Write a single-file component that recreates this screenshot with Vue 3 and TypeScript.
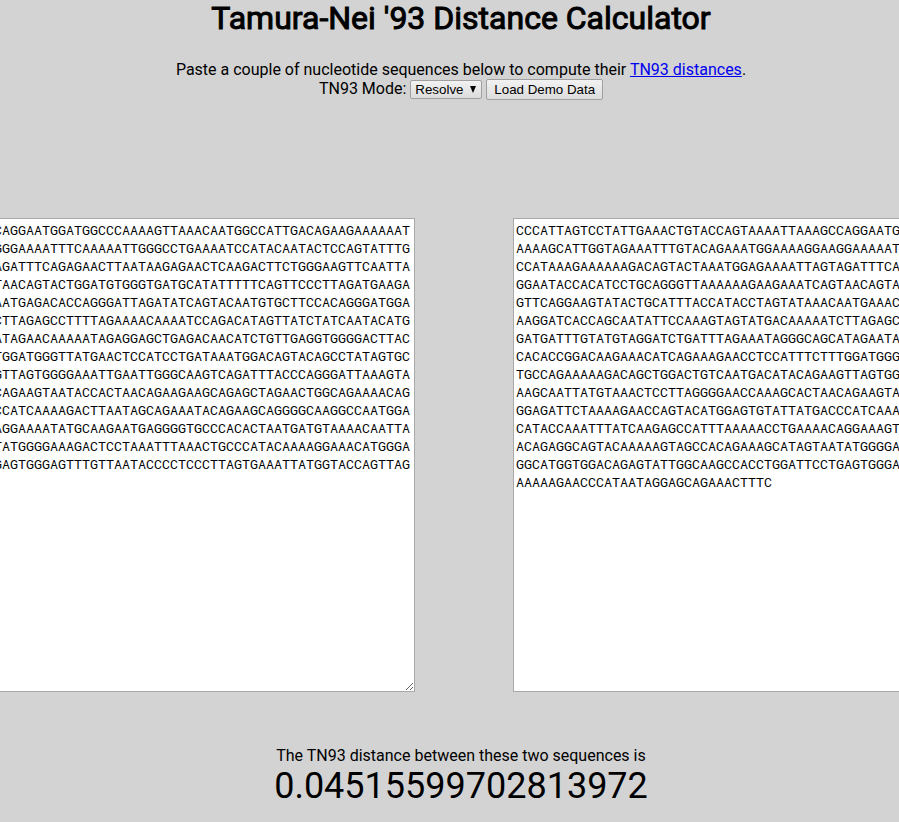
<script setup lang="ts">
import { ref } from 'vue'

type Mode = 'Resolve' | 'Average' | 'GapMM' | 'Skip'

const modes: Mode[] = ['Resolve', 'Average', 'GapMM', 'Skip']
const mode = ref<Mode>('Resolve')
const distance = ref('0.04515599702813972')

const demoFirst = [
  'CAGGAATGGATGGCCCAAAAGTTAAACAATGGCCATTGACAGAAGAAAAAAT',
  'GGGAAAATTTCAAAAATTGGGCCTGAAAATCCATACAATACTCCAGTATTTG',
  'AGATTTCAGAGAACTTAATAAGAGAACTCAAGACTTCTGGGAAGTTCAATTA',
  'TAACAGTACTGGATGTGGGTGATGCATATTTTTCAGTTCCCTTAGATGAAGA',
  'AATGAGACACCAGGGATTAGATATCAGTACAATGTGCTTCCACAGGGATGGA',
  'CTTAGAGCCTTTTAGAAAACAAAATCCAGACATAGTTATCTATCAATACATG',
  'ATAGAACAAAAATAGAGGAGCTGAGACAACATCTGTTGAGGTGGGGACTTAC',
  'TGGATGGGTTATGAACTCCATCCTGATAAATGGACAGTACAGCCTATAGTGC',
  'GTTAGTGGGGAAATTGAATTGGGCAAGTCAGATTTACCCAGGGATTAAAGTA',
  'CAGAAGTAATACCACTAACAGAAGAAGCAGAGCTAGAACTGGCAGAAAACAG',
  'CCATCAAAAGACTTAATAGCAGAAATACAGAAGCAGGGGCAAGGCCAATGGA',
  'AGGAAAATATGCAAGAATGAGGGGTGCCCACACTAATGATGTAAAACAATTA',
  'TATGGGGAAAGACTCCTAAATTTAAACTGCCCATACAAAAGGAAACATGGGA',
  'GAGTGGGAGTTTGTTAATACCCCTCCCTTAGTGAAATTATGGTACCAGTTAG',
].join('\n')

const demoSecond = [
  'CCCATTAGTCCTATTGAAACTGTACCAGTAAAATTAAAGCCAGGAATG',
  'AAAAGCATTGGTAGAAATTTGTACAGAAATGGAAAAGGAAGGAAAAAT',
  'CCATAAAGAAAAAAGACAGTACTAAATGGAGAAAATTAGTAGATTTCA',
  'GGAATACCACATCCTGCAGGGTTAAAAAAGAAGAAATCAGTAACAGTA',
  'GTTCAGGAAGTATACTGCATTTACCATACCTAGTATAAACAATGAAAC',
  'AAGGATCACCAGCAATATTCCAAAGTAGTATGACAAAAATCTTAGAGC',
  'GATGATTTGTATGTAGGATCTGATTTAGAAATAGGGCAGCATAGAATA',
  'CACACCGGACAAGAAACATCAGAAAGAACCTCCATTTCTTTGGATGGG',
  'TGCCAGAAAAAGACAGCTGGACTGTCAATGACATACAGAAGTTAGTGG',
  'AAGCAATTATGTAAACTCCTTAGGGGAACCAAAGCACTAACAGAAGTA',
  'GGAGATTCTAAAAGAACCAGTACATGGAGTGTATTATGACCCATCAAA',
  'CATACCAAATTTATCAAGAGCCATTTAAAAACCTGAAAACAGGAAAGT',
  'ACAGAGGCAGTACAAAAAGTAGCCACAGAAAGCATAGTAATATGGGGA',
  'GGCATGGTGGACAGAGTATTGGCAAGCCACCTGGATTCCTGAGTGGGA',
  'AAAAAGAACCCATAATAGGAGCAGAAACTTTC',
].join('\n')

const first = ref(demoFirst)
const second = ref(demoSecond)

function loadDemo(): void {
  first.value = demoFirst
  second.value = demoSecond
}
</script>

<template>
  <div class="viewport">
    <main class="page">
      <h1>Tamura-Nei '93 Distance Calculator</h1>
      <div class="intro">
        <p>
          Paste a couple of nucleotide sequences below to compute their
          <a href="#tn93">TN93 distances</a>.
        </p>
        <div class="controls">
          <label for="mode">TN93 Mode:</label>
          <span class="picker">
            <select id="mode" v-model="mode">
              <option v-for="m in modes" :key="m" :value="m">{{ m }}</option>
            </select>
            <svg viewBox="0 0 6 7" width="6" height="7" aria-hidden="true"><path d="M0 0H6L3 7Z" /></svg>
          </span>
          <button type="button" @click="loadDemo">Load Demo Data</button>
        </div>
      </div>
      <div class="sequences">
        <textarea v-model="first" aria-label="First sequence" spellcheck="false"></textarea>
        <textarea v-model="second" aria-label="Second sequence" spellcheck="false"></textarea>
      </div>
      <section class="result">
        <p>The TN93 distance between these two sequences is</p>
        <output>{{ distance }}</output>
      </section>
    </main>
  </div>
</template>

<style>
body {
  background: #d3d3d3;
}
</style>

<style scoped>
.viewport {
  overflow: hidden;
}
.page {
  margin: 0 -32px 0 -9px;
  font-family: Roboto, sans-serif;
  font-size: 16px;
  line-height: 19px;
  text-align: center;
  color: #000;
}
h1 {
  margin: 0;
  font-size: 32px;
  font-weight: 400;
  line-height: 37px;
  -webkit-text-stroke: 1px #000;
}
p {
  margin: 0;
}
.intro {
  padding-top: 23px;
}
a {
  color: #0000ee;
}
.controls {
  display: flex;
  justify-content: center;
  align-items: center;
  gap: 4px;
}
.controls label {
  align-self: flex-start;
}
.picker {
  position: relative;
  display: flex;
}
.picker svg {
  position: absolute;
  right: 6px;
  top: 6px;
  pointer-events: none;
}
select,
button {
  appearance: none;
  margin: 0;
  font-family: "Liberation Sans", Arial, sans-serif;
  color: #000;
  border: 1px solid #a0a0a0;
  border-radius: 2px;
  background: linear-gradient(#f2f2f2, #dcdcdc);
}
select {
  height: 19px;
  padding: 0 16px 0 4px;
}
button {
  height: 21px;
  padding: 0 7px;
}
.sequences {
  display: grid;
  grid-template-columns: 1fr 1fr;
  gap: 98px;
  margin: 118px -6px 0 0;
}
textarea {
  box-sizing: border-box;
  width: 100%;
  height: 474px;
  margin: 0;
  padding: 2px;
  border: 1px solid #a9a9a9;
  background: #fff;
  color: #000;
  font-family: "Roboto Mono", "Liberation Mono", monospace;
  line-height: 18px;
  white-space: pre;
  overflow: hidden;
  resize: both;
}
.result {
  padding: 54px 0 16px;
}
output {
  display: block;
  font-size: 36px;
  line-height: 42px;
}
</style>
